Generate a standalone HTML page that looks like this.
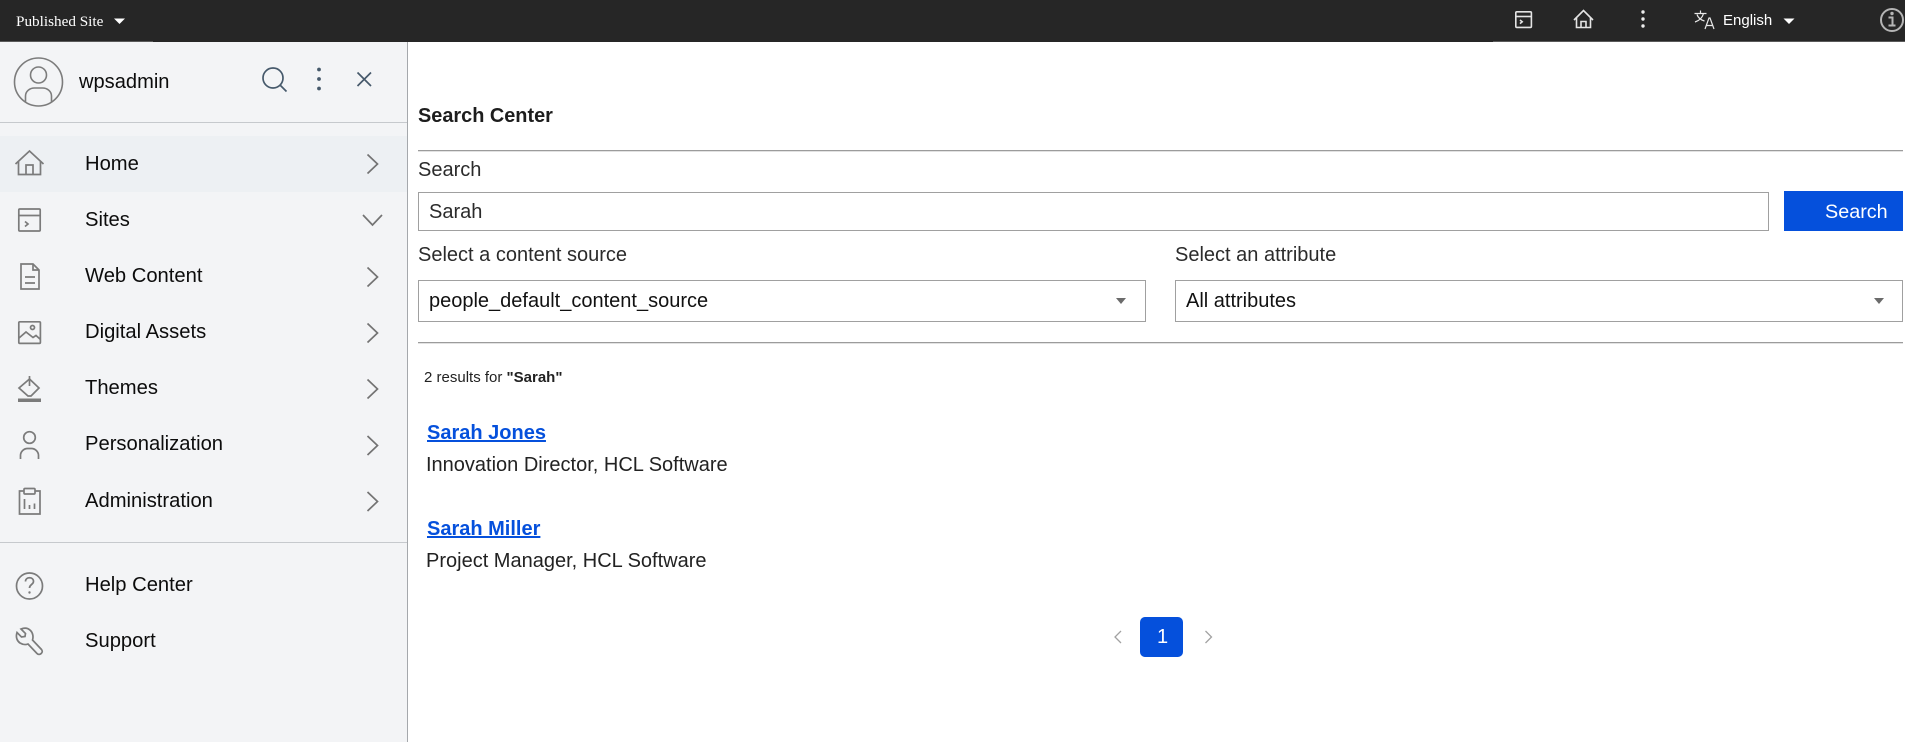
<!DOCTYPE html>
<html lang="en">
<head>
<meta charset="utf-8">
<title>Search Center</title>
<style>
html,body{margin:0;padding:0;width:1905px;height:742px;overflow:hidden;background:#fff;font-family:"Liberation Sans",Arial,sans-serif;}
.a{position:absolute;white-space:nowrap;}
svg{position:absolute;overflow:visible;fill:none;}
.nav{left:85px;font-size:20.2px;line-height:24px;color:#0c0c0c;}
.lab{font-size:20px;line-height:24px;color:#2b2b2b;}
.box{border:1px solid #a0a0a0;box-sizing:border-box;background:#fff;}
.hr{left:418px;width:1485px;height:1px;background:#9c9c9c;box-shadow:0 1px 0 #e2e2e2;}
.i{stroke:#7b7b7b;stroke-width:1.7;}
.c{stroke:#737373;stroke-width:1.7;}
</style>
</head>
<body>
<!-- top bar -->
<div class="a" style="left:0;top:0;width:1905px;height:42px;background:#262626;"></div>
<div class="a" style="left:0;top:41px;width:153px;height:1px;background:#5a5a5a;"></div>
<div class="a" style="left:1493px;top:41px;width:412px;height:1px;background:#5a5a5a;"></div>
<div class="a" style="left:16px;top:13px;font:15.2px/18px 'Liberation Serif',serif;color:#fff;">Published Site</div>
<svg style="left:0;top:0" width="1905" height="42">
<path d="M114 18.500h11l-5.500 5.500z" fill="#fff"/>
<g stroke="#e4e4e4" stroke-width="1.6">
<rect x="1515.800" y="11.800" width="15.600" height="15.600" rx="1"/>
<path d="M1516 16.500h15"/>
<path d="M1520 20l2.200 1.800-2.200 1.800"/>
<path d="M1574 20l9.500-9.500 9.500 9.500"/>
<path d="M1576.500 18v9.500h14V18"/>
<path d="M1581 27.500v-6h5v6"/>
</g>
<circle cx="1643" cy="12" r="1.700" fill="#eee"/>
<circle cx="1643" cy="19" r="1.700" fill="#eee"/>
<circle cx="1643" cy="26" r="1.700" fill="#eee"/>
<g stroke="#e8e8e8" stroke-width="1.200">
<path d="M1694.500 13.500h12M1700.500 10.500v3M1703.500 13.500c-1 4-4 7-8.500 8.500M1697 14.500c1 3 4 5.500 7.500 6.500"/>
<path d="M1705 29l4-11h1l4 11M1706.500 25.500h6"/>
</g>
<path d="M1783.500 18.500h11l-5.500 5.500z" fill="#fff"/>
<circle cx="1892" cy="20" r="11" stroke="#b5b5b5" stroke-width="2"/>
<circle cx="1892" cy="13.500" r="1.700" fill="#b5b5b5"/>
<path d="M1888.500 17.500h4v7.500M1888.500 25.500h7" stroke="#b5b5b5" stroke-width="2"/>
</svg>
<div class="a" style="left:1723px;top:12px;font-size:15px;line-height:18px;color:#fff;">English</div>

<!-- sidebar -->
<div class="a" style="left:0;top:42px;width:407px;height:700px;background:#f3f4f6;border-right:1px solid #a5a8ac;"></div>
<div class="a" style="left:0;top:122px;width:407px;height:1px;background:#c6c9cd;"></div>
<div class="a" style="left:0;top:136px;width:407px;height:56px;background:#edf0f3;"></div>
<div class="a" style="left:0;top:542px;width:407px;height:1px;background:#c6c9cd;"></div>
<div class="a" style="left:79px;top:70px;font-size:20.100px;line-height:24px;color:#0c0c0c;">wpsadmin</div>
<div class="a nav" style="top:152px;">Home</div>
<div class="a nav" style="top:208px;">Sites</div>
<div class="a nav" style="top:264px;">Web Content</div>
<div class="a nav" style="top:320px;">Digital Assets</div>
<div class="a nav" style="top:376px;">Themes</div>
<div class="a nav" style="top:432px;">Personalization</div>
<div class="a nav" style="top:489px;">Administration</div>
<div class="a nav" style="top:573px;">Help Center</div>
<div class="a nav" style="top:629px;">Support</div>

<svg style="left:0;top:0" width="407" height="742">
<!-- avatar -->
<g stroke="#7c7c7c" stroke-width="1.600">
<circle cx="38.500" cy="82" r="24"/>
<circle cx="38.500" cy="75" r="8"/>
<path d="M25.500 102v-6c0-4.500 4-8 9-8h8c5 0 9 3.500 9 8v6"/>
</g>
<!-- search, kebab, close -->
<g stroke="#46596b" stroke-width="1.700">
<circle cx="273" cy="78" r="10"/>
<path d="M280.500 85.500l6 6"/>
<path d="M357.500 72.500l13.500 13.500M371 72.500l-13.500 13.500"/>
</g>
<circle cx="319" cy="69.500" r="1.900" fill="#46596b"/>
<circle cx="319" cy="79" r="1.900" fill="#46596b"/>
<circle cx="319" cy="88.500" r="1.900" fill="#46596b"/>
<!-- Home -->
<g class="i">
<path d="M15.500 164l14-13 14 13"/>
<path d="M18.500 161v13.500h22V161"/>
<path d="M26 174.500v-9.500h7v9.500"/>
</g>
<!-- Sites -->
<g class="i">
<rect x="18.800" y="209" width="21.400" height="22" rx="1"/>
<path d="M19 215.500h21"/>
<path d="M25 221.500l3 2.500-3 2.500"/>
</g>
<!-- Web content -->
<g class="i">
<path d="M33 264h-12v25h18v-19z"/>
<path d="M33 264v6h6"/>
<path d="M25 277h10M25 283h10"/>
</g>
<!-- Digital assets -->
<g class="i">
<rect x="18.800" y="321.800" width="21.600" height="21.600" rx="1"/>
<circle cx="32.500" cy="327.500" r="2"/>
<path d="M19 338l7-6 7 5.500 3-2 4.500 4"/>
</g>
<!-- Themes -->
<g class="i">
<path d="M29.500 376v10"/>
<path d="M29.500 379l9.500 9-8 8h-3l-9-8z"/>
</g>
<rect x="18" y="398.500" width="23" height="3.500" fill="#7b7b7b"/>
<!-- Personalization -->
<g class="i">
<circle cx="29.500" cy="437.500" r="5.800"/>
<path d="M20.500 459v-3.500c0-4 3.500-7 7-7h4c3.500 0 7 3 7 7v3.500"/>
</g>
<!-- Administration -->
<g class="i">
<path d="M24 491h-4.500v23h20.500v-23h-4.500"/>
<rect x="24" y="488.500" width="11" height="5.500" rx="1"/>
<path d="M24.500 499v10M29.500 505v4M34.500 503.500v5.500"/>
</g>
<!-- Help -->
<g class="i">
<circle cx="29.500" cy="586" r="13"/>
<path d="M25.500 581.500c0-5 8-5 8 0 0 3-4 3-4 6.500"/>
</g>
<circle cx="29.500" cy="592.500" r="1.200" fill="#7b7b7b"/>
<!-- Support -->
<path class="i" d="M21 629L25.500 633.500L25 636.500L21.500 637L17 632.500C15.500 637 17 641 20 643C22.500 644.500 25.500 645 28 644L37 653.500C39.500 656 44 652.500 41.500 649.500L32.500 640C33.500 637 33 633 30.500 630.500C28 628 24.500 627.500 21 629Z"/>
<!-- chevrons -->
<g class="c">
<path d="M367.500 154.500l10 9.500-10 9.500"/>
<path d="M363 215l9.500 10 9.500-10"/>
<path d="M367.500 267.500l10 9.500-10 9.500"/>
<path d="M367.500 323.500l10 9.500-10 9.500"/>
<path d="M367.500 379.500l10 9.500-10 9.500"/>
<path d="M367.500 436l10 9.500-10 9.500"/>
<path d="M367.500 492l10 9.500-10 9.500"/>
</g>
</svg>

<!-- main -->
<div class="a" style="left:418px;top:104px;font-size:19.900px;line-height:24px;font-weight:bold;color:#1d1d1d;">Search Center</div>
<div class="a hr" style="top:150px;"></div>
<div class="a lab" style="left:418px;top:158px;">Search</div>
<div class="a box" style="left:418px;top:192px;width:1351px;height:39px;"></div>
<div class="a" style="left:429px;top:200px;font-size:20px;line-height:24px;color:#2b2b2b;">Sarah</div>
<div class="a" style="left:1784px;top:191px;width:119px;height:40px;background:#0550dc;"></div>
<div class="a" style="left:1825px;top:200px;font-size:19.800px;line-height:24px;color:#fff;">Search</div>
<div class="a lab" style="left:418px;top:243px;">Select a content source</div>
<div class="a lab" style="left:1175px;top:243px;">Select an attribute</div>
<div class="a box" style="left:418px;top:280px;width:728px;height:42px;"></div>
<div class="a box" style="left:1175px;top:280px;width:728px;height:42px;"></div>
<div class="a" style="left:429px;top:289px;font-size:20px;line-height:24px;color:#111;">people_default_content_source</div>
<div class="a" style="left:1186px;top:289px;font-size:20px;line-height:24px;color:#111;">All attributes</div>
<svg style="left:0;top:0" width="1905" height="742">
<path d="M1116 298h10l-5 6z" fill="#6b6b6b"/>
<path d="M1874 298h10l-5 6z" fill="#6b6b6b"/>
<path d="M1121 631l-6 6 6 6M1205.500 631l6 6-6 6" stroke="#a2a2a2" stroke-width="1.300"/>
</svg>
<div class="a hr" style="top:342px;"></div>
<div class="a" style="left:424px;top:369px;font-size:15px;line-height:18px;color:#222;">2 results for <b>"Sarah"</b></div>
<div class="a" style="left:427px;top:421px;font-size:20px;line-height:24px;font-weight:bold;color:#0550dc;text-decoration:underline;">Sarah Jones</div>
<div class="a" style="left:426px;top:453px;font-size:20px;line-height:24px;color:#222;">Innovation Director, HCL Software</div>
<div class="a" style="left:427px;top:517px;font-size:20px;line-height:24px;font-weight:bold;color:#0550dc;text-decoration:underline;">Sarah Miller</div>
<div class="a" style="left:426px;top:549px;font-size:20px;line-height:24px;color:#222;">Project Manager, HCL Software</div>
<div class="a" style="left:1140px;top:617px;width:43px;height:40px;border-radius:5px;background:#0550dc;color:#fff;font-size:20px;line-height:40px;text-align:center;text-indent:2px;">1</div>
</body>
</html>
